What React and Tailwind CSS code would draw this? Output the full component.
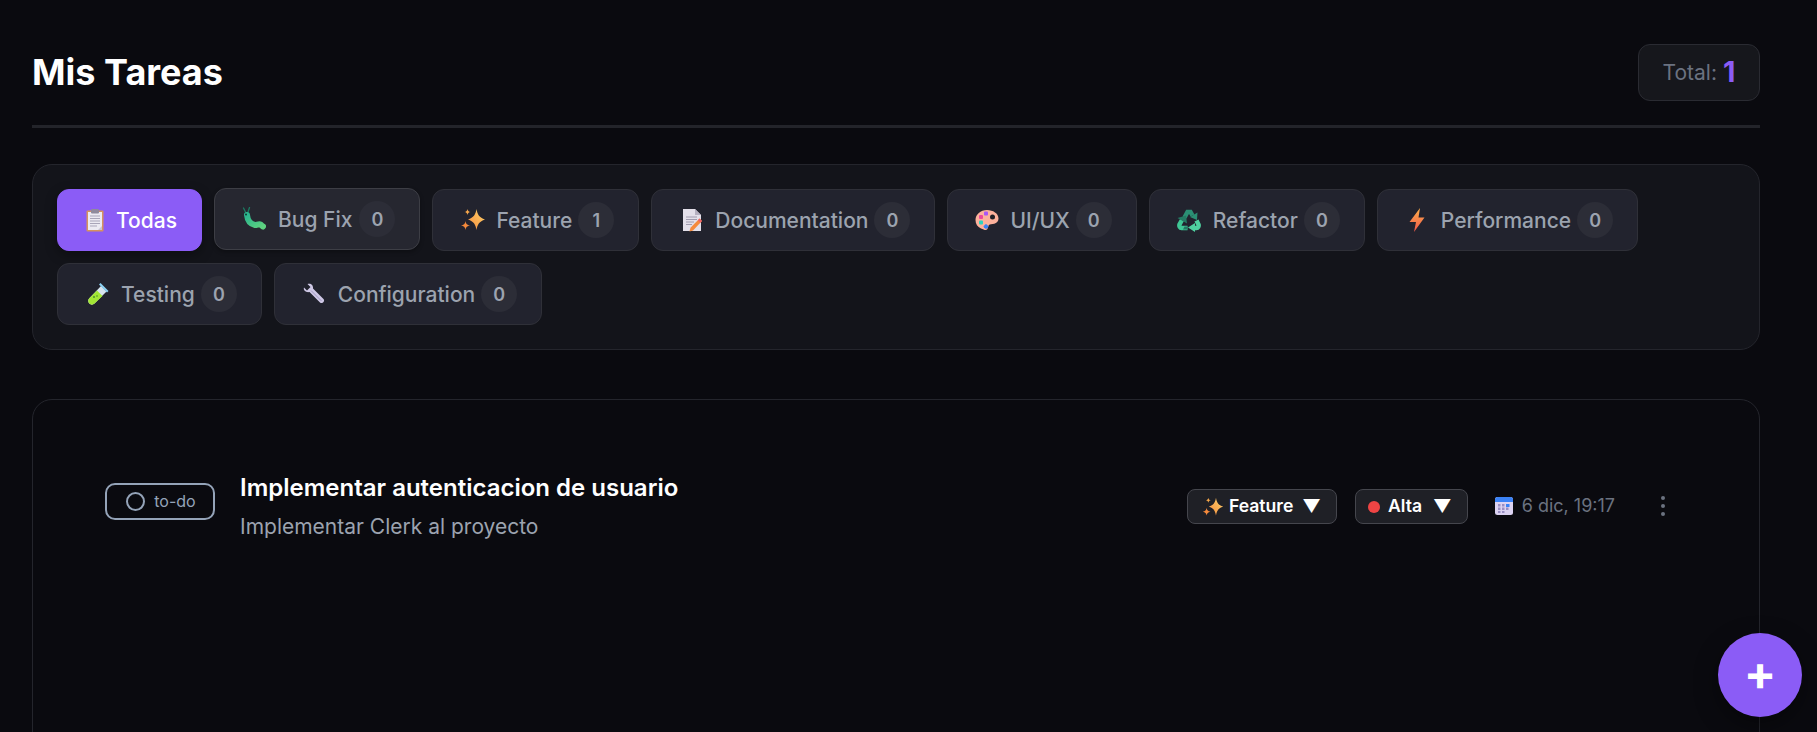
import React from "react";

const F = { fontFamily: "Inter, 'Liberation Sans', sans-serif" };

function Clipboard() {
  return (
    <svg width="24" height="24" viewBox="0 0 24 24">
      <rect x="3.500" y="2.500" width="17" height="21" rx="1" fill="#d5935f" />
      <rect x="5" y="4" width="14" height="18" fill="#eceaf2" />
      <rect x="8" y="1" width="8" height="4.500" rx="1" fill="#8f8a9c" />
      <path d="M7 8h10M7 10.500h10M7 13h10M7 15.500h10M7 18h7" stroke="#a9a5b8" strokeWidth="1" />
      <path d="M15 22l4-4v4z" fill="#c9c4d4" />
    </svg>
  );
}
function Bug() {
  return (
    <svg width="24" height="24" viewBox="0 0 24 24">
      <defs>
        <linearGradient id="bugG" x1="0" y1="0" x2="1" y2="1">
          <stop offset="0" stopColor="#2bb58e" />
          <stop offset="1" stopColor="#5ed17f" />
        </linearGradient>
      </defs>
      <path d="M1.500 1L3.500 5M7.500 0.500L6 5" stroke="#1c7a62" strokeWidth="1.300" strokeLinecap="round" />
      <path d="M5 8c.5 5 3 9 8 10 1.500.3 4-1.500 5.500-.5 1 .7 1.500 1.500 2.500 2" fill="none" stroke="url(#bugG)" strokeWidth="6" strokeLinecap="round" />
      <circle cx="4" cy="7.500" r="1" fill="#0b3d33" />
    </svg>
  );
}
function Sparkles({ id }) {
  return (
    <svg width="24" height="24" viewBox="0 0 24 24">
      <defs>
        <linearGradient id={id} x1="1" y1="0" x2="0" y2="1">
          <stop offset="0" stopColor="#fdd36b" />
          <stop offset="1" stopColor="#f58a3c" />
        </linearGradient>
      </defs>
      <path d="M15.500 1c1 5.800 2.800 8.500 8.500 10.500-5.700 2-7.500 4.700-8.500 10.500-1-5.800-2.800-8.500-8.500-10.500C12.700 9.500 14.500 6.800 15.500 1z" fill={`url(#${id})`} />
      <path d="M6.500 1c.4 2 1 2.600 3 3-2 .4-2.600 1-3 3-.4-2-1-2.600-3-3 2-.4 2.600-1 3-3z" fill="#f9a94c" />
      <path d="M4.500 13c.5 3 1.500 3.900 4.500 4.500-3 .6-4 1.500-4.500 4.500-.5-3-1.500-3.900-4.500-4.500 3-.6 4-1.500 4.500-4.500z" fill="#f58a3c" />
    </svg>
  );
}
function Memo() {
  return (
    <svg width="24" height="24" viewBox="0 0 24 24">
      <path d="M3 1h12l6 6v16H3z" fill="#e3dfe9" />
      <path d="M15 1l6 6h-6z" fill="#b5b0c0" />
      <path d="M6 9h11M6 11.500h11M6 14h8M6 16.500h6" stroke="#a09bae" strokeWidth="1" />
      <path d="M19.500 10.500l2.500 2.500-9 9.500-3.500 1 1-3.800z" fill="#f58a3c" />
      <path d="M19.500 10.500l2.500 2.500-1.600 1.700-2.500-2.500z" fill="#f0616a" />
    </svg>
  );
}
function Palette() {
  return (
    <svg width="24" height="24" viewBox="0 0 24 24">
      <path d="M12 2C5.500 2 0.500 6.500 0.500 12c0 4 2 7 5.500 8.500 2 .9 3.500 1.500 4.500 1.500 3 0 2-3.500 3.500-5 1.500-1.500 9.500 0 9.500-6.500C23.500 5.500 18 2 12 2z" fill="#fdb19c" />
      <rect x="9" y="3.500" width="4" height="4" rx="1" fill="#a855f7" />
      <rect x="4" y="7" width="4" height="4" rx="1" fill="#ec4899" />
      <rect x="4" y="12.500" width="4" height="4" rx="1" fill="#2dd4bf" />
      <rect x="9" y="16.500" width="4" height="4" rx="1" transform="rotate(45 11 18.500)" fill="#3b82f6" />
      <circle cx="17.500" cy="9" r="2.500" fill="#1f1f26" />
    </svg>
  );
}
function Recycle() {
  return (
    <svg width="24" height="24" viewBox="0 0 24 24" fill="none" strokeWidth="4.500">
      <path d="M7.500 9.500L10.500 4h3L15.500 7.500" stroke="#2b8f74" />
      <path d="M20.500 4.500L20 12l-7-3z" fill="#2b8f74" />
      <path d="M19.500 12.500L21.500 16.500c.5 1.500-.5 3.500-2 3.500H17" stroke="#4fd1a0" />
      <path d="M18 15v9l-7-4.500z" fill="#4fd1a0" />
      <path d="M10.500 20H4.500c-1.500 0-2.500-2-2-3.500L5 12" stroke="#3fc795" />
      <path d="M0.500 10l8.500-2.500 1 8z" fill="#247a63" />
      <path d="M10.500 18.500v3H6l1.500-3z" fill="#247a63" />
    </svg>
  );
}
function Bolt() {
  return (
    <svg width="24" height="24" viewBox="0 0 24 24">
      <defs>
        <linearGradient id="boltG" x1="0" y1="0" x2="0" y2="1">
          <stop offset="0" stopColor="#fdb04a" />
          <stop offset="1" stopColor="#f0564a" />
        </linearGradient>
      </defs>
      <path d="M15 0L4.500 14H11L9 24l10.500-14.500H13.500z" fill="url(#boltG)" />
    </svg>
  );
}
function Tube() {
  return (
    <svg width="24" height="24" viewBox="0 0 24 24">
      <path d="M15 4l5.500 5.500L8.500 21.500c-1.500 1.500-3.800 1.500-5.200 0s-1.500-3.700 0-5.200z" fill="#d7e4ee" />
      <path d="M11 8.500l5.500 5.500-8 7.500c-1.500 1.500-3.800 1.500-5.200 0s-1.500-3.700 0-5.200z" fill="#a3e635" />
      <path d="M14.500 1l8 8-1.500 1.500-8-8z" fill="#8dd3f5" />
      <circle cx="8" cy="15" r="1" fill="#4d8f2a" />
      <circle cx="11" cy="14" r=".8" fill="#4d8f2a" />
    </svg>
  );
}
function Wrench() {
  return (
    <svg width="24" height="24" viewBox="0 0 24 24">
      <path d="M2 5.500L5 8.500 8.500 5 5.500 2C8.500.8 11.500 3 11 6.500l10.500 10.500c2 2 -1.500 5.500 -3.500 3.500L7.500 10C4 10.800 1 8 2 5.500z" fill="#cfc8e6" />
      <path d="M9 8.500l10.500 10.500" stroke="#9f97bf" strokeWidth="1" />
    </svg>
  );
}
function Calendar() {
  return (
    <svg width="18" height="18" viewBox="0 0 18 18">
      <rect x="0" y="0" width="18" height="18" rx="2.500" fill="#dcd3f2" />
      <path d="M0 5V2.500A2.500 2.500 0 0 1 2.500 0h13A2.500 2.500 0 0 1 18 2.500V5z" fill="#3b82f6" />
      <g fill="#9a8fc4">
        <rect x="3" y="7" width="2.500" height="2.500" />
        <rect x="7" y="7" width="2.500" height="2.500" />
        <rect x="3" y="10.500" width="2.500" height="2.500" />
        <rect x="7" y="10.500" width="2.500" height="2.500" />
        <rect x="11" y="10.500" width="2.500" height="2.500" />
        <rect x="3" y="14" width="2.500" height="2" />
        <rect x="7" y="14" width="2.500" height="2" />
      </g>
      <rect x="11" y="7" width="3.500" height="3" fill="#3b82f6" />
    </svg>
  );
}

function FilterButton({ icon, label, count, active, hovered, w = "w-[31px]", badgeGap = "ml-[6px]" }) {
  let cls = "border-[#2f3038] bg-[#22232e] text-[#9ca3af]";
  if (active) cls = "border-[#8b5cf6] bg-[#8b5cf6] text-white shadow-[0_4px_12px_rgba(0,0,0,0.35)]";
  if (hovered) cls = "border-[#3d3e45] bg-[#262730] text-[#9ca3af] -translate-y-px shadow-[0_2px_4px_rgba(0,0,0,0.3)]";
  return (
    <div className={`flex items-center rounded-xl border px-6 py-3 text-[21px] font-medium ${cls}`}>
      <span className={`flex justify-center ${w}`}>{icon}</span>
      <span className="ml-2 pt-px leading-[35px]">{label}</span>
      {count !== undefined && (
        <span className={`flex h-9 w-9 items-center justify-center rounded-full bg-[#2c2d37] pt-px text-[18px] font-semibold text-[#9ca3af] ${badgeGap}`}>
          {count}
        </span>
      )}
    </div>
  );
}

function Pill({ children, className }) {
  return (
    <div className={`flex h-[35px] items-center rounded-lg border border-[#45464d] bg-[#1f2026] pr-[15px] text-[17.6px] font-semibold text-white ${className}`}>
      {children}
    </div>
  );
}

export default function App() {
  return (
    <div style={F} className="relative h-screen overflow-hidden bg-[#0a0a0f] pl-8 pr-[57px] pt-[44px]">
      <header className="mb-9 flex items-center justify-between border-b-[3px] border-[#23242a] pb-6">
        <h1 className="mb-[2px] text-[36px] font-bold leading-[40px] text-white">Mis Tareas</h1>
        <div className="flex h-[57px] w-[122px] items-center justify-center rounded-xl border border-[#2a2b32] bg-[#16171c] text-[21px] text-[#6b7280]">
          Total:<span className="ml-[6px] text-[28.800px] font-bold leading-none text-[#8b5cf6]">1</span>
        </div>
      </header>

      <section className="mb-[49px] flex flex-wrap gap-3 rounded-[20px] border border-[#24252c] bg-[#13141a] p-6">
        <FilterButton icon={<Clipboard />} label="Todas" active w="w-[26px]" />
        <FilterButton icon={<Bug />} label="Bug Fix" count={0} hovered badgeGap="ml-[7px]" />
        <FilterButton icon={<Sparkles id="sparkA" />} label="Feature" count={1} />
        <FilterButton icon={<Memo />} label="Documentation" count={0} />
        <FilterButton icon={<Palette />} label="UI/UX" count={0} w="w-[30px]" />
        <FilterButton icon={<Recycle />} label="Refactor" count={0} />
        <FilterButton icon={<Bolt />} label="Performance" count={0} />
        <FilterButton icon={<Tube />} label="Testing" count={0} />
        <FilterButton icon={<Wrench />} label="Configuration" count={0} />
      </section>

      <section className="h-[600px] rounded-[20px] border border-[#24252c] px-[72px] pt-[70px]">
        <div className="flex items-start">
          <div className="mt-[13px] flex h-[37px] w-[110px] items-center justify-center gap-[9px] rounded-[10px] border-2 border-[#94a3b8] pb-px pl-[2px] text-[16px] text-[#94a3b8]">
            <span className="h-[19px] w-[19px] rounded-full border-2 border-[#94a3b8]" />
            to-do
          </div>
          <div className="ml-[25px] flex-1">
            <div className="text-[24px] font-semibold leading-[36px] text-white">
              Implementar autenticacion de usuario
            </div>
            <div className="mt-[3px] text-[21px] leading-[36px] text-[#9ca3af]">Implementar Clerk al proyecto</div>
          </div>
          <div className="mr-[22px] mt-[19px] flex items-center">
            <Pill className="pl-[15px]">
              <span className="flex w-[20px] justify-center">
                <span className="scale-[0.85]">
                  <Sparkles id="sparkB" />
                </span>
              </span>
              <span className="ml-[6px]">Feature</span>
              <span className="ml-[9px] text-[18px] leading-none">▼</span>
            </Pill>
            <div className="ml-[18px]">
              <Pill className="pl-[12px]">
                <span className="h-3 w-3 rounded-full bg-[#ef4444]" />
                <span className="ml-[8px]">Alta</span>
                <span className="ml-[11px] text-[18px] leading-none">▼</span>
              </Pill>
            </div>
            <div className="mb-[2px] ml-[27px] flex items-center text-[#6b7280]">
              <Calendar />
              <span className="ml-[9px] text-[18px]">6 dic, 19:17</span>
            </div>
            <div className="mb-[2px] ml-[46px] flex w-1 flex-col gap-[4px]">
              <span className="h-1 w-1 rounded-full bg-[#6b7280]" />
              <span className="h-1 w-1 rounded-full bg-[#6b7280]" />
              <span className="h-1 w-1 rounded-full bg-[#6b7280]" />
            </div>
          </div>
        </div>
      </section>

      <button className="absolute bottom-[15px] right-[15px] flex h-[84px] w-[84px] items-center justify-center rounded-full bg-[#8b5cf6] pb-1 text-[48px] font-bold leading-none text-white shadow-[0_8px_24px_rgba(0,0,0,0.4)]">
        +
      </button>
    </div>
  );
}
